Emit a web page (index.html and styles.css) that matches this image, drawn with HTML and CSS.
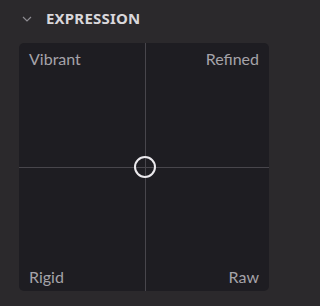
FILE: index.html
```html
<!DOCTYPE html>
<html>
<head>
<meta charset="utf-8">
<link rel="stylesheet" href="styles.css">
</head>
<body>
<div class="panel">
  <div class="header">
    <svg class="chevron" width="10" height="6" viewBox="0 0 10 6"><path d="M1 1 L5 5 L9 1" fill="none" stroke="#8e8c92" stroke-width="1.2"/></svg>
    <span class="title">EXPRESSION</span>
  </div>
  <div class="pad">
    <div class="vline"></div>
    <div class="hline"></div>
    <div class="knob"></div>
    <span class="label tl">Vibrant</span>
    <span class="label tr">Refined</span>
    <span class="label bl">Rigid</span>
    <span class="label br">Raw</span>
  </div>
</div>
</body>
</html>
```
FILE: styles.css
```css
html, body {
  margin: 0;
  padding: 0;
  background: #2b292c;
}
.panel {
  width: 250px;
  padding: 0 0 0 19px;
}
.header {
  height: 43px;
  display: flex;
  align-items: center;
  padding-left: 3px;
  gap: 14px;
}
.chevron {
  display: block;
  margin-top: -6px;
}
.title {
  font-family: "Noto Sans", sans-serif;
  color: #d9d7db;
  font-weight: 700;
  font-size: 15px;
  letter-spacing: 0.2px;
  margin-top: -7px;
}
.pad {
  position: relative;
  height: 248px;
  background: #1e1d22;
  border-radius: 5px;
  display: grid;
  grid-template-columns: 1fr 1fr;
  grid-template-rows: 1fr 1fr;
  padding: 6px 10px 5px 10px;
  box-sizing: border-box;
}
.label {
  font-family: Lato, "Noto Sans", sans-serif;
  color: #a5a3a9;
  font-size: 16px;
}
.tr, .br { justify-self: end; }
.bl, .br { align-self: end; }
.vline {
  position: absolute;
  left: 126px;
  top: 0;
  bottom: 0;
  width: 1px;
  background: #48464c;
}
.hline {
  position: absolute;
  top: 124px;
  left: 0;
  right: 0;
  height: 1px;
  background: #48464c;
}
.knob {
  position: absolute;
  left: 115px;
  top: 113px;
  width: 18px;
  height: 18px;
  border: 2px solid #ebe9ed;
  border-radius: 50%;
}
```
